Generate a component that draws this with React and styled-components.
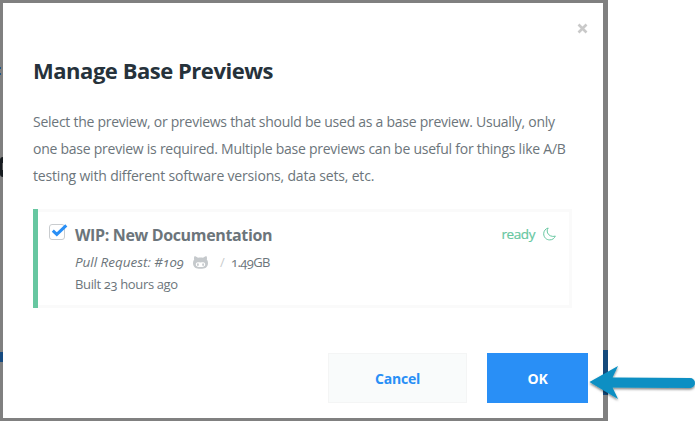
import React from 'react';
import styled, { createGlobalStyle } from 'styled-components';

const GlobalStyle = createGlobalStyle`
  *, *::before, *::after { box-sizing: border-box; }
  body {
    margin: 0;
    background: #fff;
    overflow: hidden;
    font-family: "Open Sans", "Noto Sans", sans-serif;
    font-feature-settings: "onum";
    color: #6c757b;
  }
  button { font-family: inherit; padding: 0; cursor: pointer; }
`;

const Stage = styled.div`
  position: relative;
  width: 695px;
  height: 421px;
`;

const Backdrop = styled.div`
  width: 608px;
  height: 421px;
  padding: 3px 5px 3px 3px;
  background: #808080;
`;

const PageTrace = styled.i`
  position: absolute;
  left: ${(p) => p.$x}px;
  top: ${(p) => p.$y}px;
  width: ${(p) => p.$w}px;
  height: ${(p) => p.$h}px;
  background: ${(p) => p.$color};
  border-radius: ${(p) => p.$radius || '0'};
`;

const Dialog = styled.section`
  position: relative;
  display: flex;
  flex-direction: column;
  width: 600px;
  height: 415px;
  padding: 51px 15px 15px 30px;
  background: #fff;
`;

const CloseButton = styled.button`
  position: absolute;
  top: 20px;
  right: 15px;
  width: 11px;
  height: 11px;
  border: 0;
  background: none;
  svg { display: block; }
`;

const Title = styled.h1`
  margin: 0;
  font-size: 22px;
  font-weight: 700;
  line-height: 32px;
  letter-spacing: -0.47px;
  color: #26323b;
  white-space: nowrap;
`;

const Description = styled.p`
  margin: 22px 0 0;
  font-size: 14px;
  line-height: 27px;
`;

const Line = styled.span`
  display: block;
  white-space: nowrap;
  letter-spacing: ${(p) => p.$tracking}px;
`;

const PreviewCard = styled.article`
  display: flex;
  align-items: flex-start;
  width: 539px;
  height: 99px;
  margin-top: 20px;
  padding: 15px 16px 0;
  background: linear-gradient(#67c7a1, #67c7a1) left / 5px 100% no-repeat;
  box-shadow: inset 0 0 0 3px #fafafa;
`;

const Checkbox = styled.span`
  width: 26px;
  height: 18px;
  svg { display: block; }
`;

const CardAccent = styled.span`
  flex: none;
  align-self: stretch;
  width: 5px;
  margin: -15px 11px 0 -16px;
  background: #67c7a1;
`;

const Details = styled.div`
  flex: 1;
`;

const PreviewName = styled.h2`
  margin: 0;
  font-size: 16px;
  font-weight: 700;
  line-height: 22px;
  letter-spacing: -0.35px;
  white-space: nowrap;
`;

const Meta = styled.div`
  display: flex;
  align-items: center;
  height: 22px;
  margin-top: 5px;
  font-size: 13px;
  white-space: nowrap;
`;

const PullRequest = styled.em`
  width: 109px;
  font-size: 13.5px;
  letter-spacing: -0.03px;
`;

const GithubMark = styled.svg`
  margin-left: 9px;
`;

const Divider = styled.span`
  width: 5px;
  margin: 0 6px 0 12px;
  color: #c8cbcd;
`;

const Size = styled.span`
  letter-spacing: -0.6px;
`;

const Built = styled.div`
  font-size: 13px;
  line-height: 22px;
  letter-spacing: -0.36px;
`;

const Status = styled.div`
  display: flex;
  align-items: center;
  gap: 8px;
  height: 20px;
  font-size: 13.5px;
  letter-spacing: -0.4px;
  color: #67c7a1;
  -webkit-text-stroke: 0.2px;
`;

const Actions = styled.footer`
  display: flex;
  justify-content: flex-end;
  gap: 20px;
  margin-top: auto;
`;

const Button = styled.button`
  width: ${(p) => (p.$primary ? 101 : 139)}px;
  height: 50px;
  border: 1px solid ${(p) => (p.$primary ? '#298ff6' : '#f4f5f5')};
  background: ${(p) => (p.$primary ? '#298ff6' : '#f9fbfb')};
  color: ${(p) => (p.$primary ? '#fff' : '#298ff6')};
  font-size: 14px;
  font-weight: 700;
  letter-spacing: -0.2px;
`;

const Arrow = styled.svg`
  position: absolute;
  left: 585px;
  top: 360px;
`;

export default function App() {
  return (
    <>
      <GlobalStyle />
      <Stage>
        <Backdrop>
          <Dialog>
            <CloseButton aria-label="Close">
              <svg width="11" height="11" viewBox="0 0 11 11">
                <path d="M1.500 1.500 9.500 9.500M9.500 1.500 1.500 9.500" stroke="#c9c9c9" strokeWidth="2.600" />
              </svg>
            </CloseButton>
            <Title>Manage Base Previews</Title>
            <Description>
              <Line $tracking={-0.26}>Select the preview, or previews that should be used as a base preview. Usually, only</Line>
              <Line $tracking={-0.25}>one base preview is required. Multiple base previews can be useful for things like A/B</Line>
              <Line $tracking={-0.18}>testing with different software versions, data sets, etc.</Line>
            </Description>
            <PreviewCard>
              <CardAccent />
              <Checkbox role="checkbox" aria-checked="true">
                <svg width="20" height="18" viewBox="0 0 20 18">
                  <rect x="0.5" y="0.5" width="15" height="15" rx="2.5" fill="#fff" stroke="#c9cccf" />
                  <path d="m3.8 6.7 4 3.700 9.500-9" fill="none" stroke="#298ff6" strokeWidth="3" />
                </svg>
              </Checkbox>
              <Details>
                <PreviewName>WIP: New Documentation</PreviewName>
                <Meta>
                  <PullRequest>Pull Request: #109</PullRequest>
                  <GithubMark width="15" height="13" viewBox="0 0 15 13">
                    <path
                      fill="#c5c9cc"
                      fillRule="evenodd"
                      d="M1.400.3C2.700.3 4 1 5 1.700c1.500-.3 3.500-.3 5 0C11 1 12.300.3 13.600.3c.5 1.200.5 2.300.2 3.200.8.900 1.200 2 1.200 3.400C15 11.500 11.800 12.700 7.500 12.700S0 11.500 0 6.900c0-1.400.4-2.500 1.200-3.400C.9 2.600.9 1.500 1.400.3ZM4.800 6.300C3.500 6.300 2.800 7.200 2.800 8.600c0 2 1.900 2.500 4.700 2.500s4.700-.5 4.700-2.500C12.200 7.200 11.500 6.300 10.200 6.300c-.9 0-1.800.2-2.700.2S5.700 6.300 4.800 6.300Z"
                    />
                    <ellipse cx="4.900" cy="8.700" rx="0.900" ry="1.400" fill="#c5c9cc" />
                    <ellipse cx="10.100" cy="8.700" rx="0.900" ry="1.400" fill="#c5c9cc" />
                  </GithubMark>
                  <Divider>/</Divider>
                  <Size>1.49GB</Size>
                </Meta>
                <Built>Built 23 hours ago</Built>
              </Details>
              <Status>
                ready
                <svg width="13" height="14" viewBox="0 0 13 14">
                  <path
                    d="M5.200 1C2.500 1.700.7 3.900.7 6.800c0 3.500 2.600 6.100 6 6.100 2.700 0 4.800-1.500 5.600-3.900-1 .4-1.800.5-2.700.4C6.200 9 4.200 6.700 4.200 4c0-1.200.3-2.100 1-3Z"
                    fill="none" stroke="#67c7a1" strokeLinejoin="round"
                  />
                </svg>
              </Status>
            </PreviewCard>
            <Actions>
              <Button>Cancel</Button>
              <Button $primary>OK</Button>
            </Actions>
          </Dialog>
        </Backdrop>
        <PageTrace $x={0} $y={67} $w={1} $h={2} $color="#1c5687" />
        <PageTrace $x={0} $y={73} $w={1} $h={2} $color="#1c5687" />
        <PageTrace $x={0} $y={157} $w={3} $h={20} $color="#171c20" $radius="3px 0 0 3px" />
        <PageTrace $x={2} $y={163} $w={1} $h={7} $color="#5c5d5e" />
        <PageTrace $x={0} $y={352} $w={3} $h={10} $color="#154a80" />
        <PageTrace $x={603} $y={350} $w={5} $h={45} $color="#154a7c" />
        <Arrow width="110" height="48" viewBox="0 0 110 48">
          <defs>
            <filter id="arrowShadow" x="-10%" y="-10%" width="120%" height="140%">
              <feDropShadow dx="0" dy="1.500" stdDeviation="1" floodColor="#000" floodOpacity="0.5" />
            </filter>
          </defs>
          <path
            d="M4.500 22 33 6 27.500 17.500 105 18a5 5 0 0 1 0 10L27.500 27.500 33 39Z"
            fill="#088fc3" filter="url(#arrowShadow)"
          />
        </Arrow>
      </Stage>
    </>
  );
}
